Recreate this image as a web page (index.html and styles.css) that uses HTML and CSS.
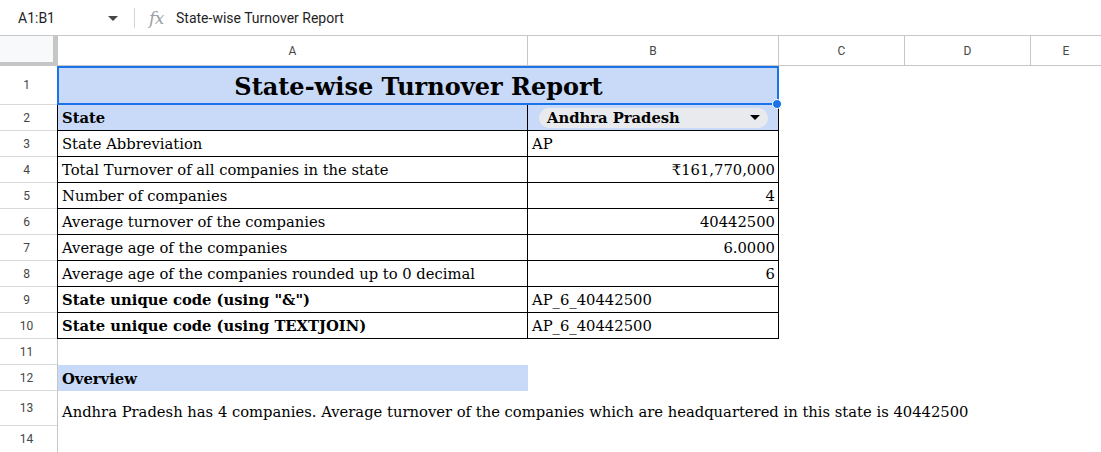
FILE: index.html
```html
<!DOCTYPE html>
<html>
<head>
<meta charset="utf-8">
<link rel="stylesheet" href="styles.css">
</head>
<body>
<div class="toolbar">
  <div class="namebox">A1:B1</div>
  <div class="caret"></div>
  <div class="sep"></div>
  <div class="fx">fx</div>
  <div class="formula">State-wise Turnover Report</div>
</div>
<div class="sheet">
  <div class="corner"></div>
  <div class="colhead first">A</div>
  <div class="colhead">B</div>
  <div class="colhead">C</div>
  <div class="colhead">D</div>
  <div class="colhead last">E</div>

  <div class="rowhead">1</div>
  <div class="cell title">State-wise Turnover Report</div>
  <div class="blank"></div><div class="blank"></div><div class="blank"></div>

  <div class="rowhead">2</div>
  <div class="cell ta head bold">State</div>
  <div class="cell tb head chipcell"><div class="chip"><span>Andhra Pradesh</span><span class="tri"></span></div></div>
  <div class="blank"></div><div class="blank"></div><div class="blank"></div>

  <div class="rowhead">3</div>
  <div class="cell ta">State Abbreviation</div>
  <div class="cell tb">AP</div>
  <div class="blank"></div><div class="blank"></div><div class="blank"></div>

  <div class="rowhead">4</div>
  <div class="cell ta">Total Turnover of all companies in the state</div>
  <div class="cell tb num">₹161,770,000</div>
  <div class="blank"></div><div class="blank"></div><div class="blank"></div>

  <div class="rowhead">5</div>
  <div class="cell ta">Number of companies</div>
  <div class="cell tb num">4</div>
  <div class="blank"></div><div class="blank"></div><div class="blank"></div>

  <div class="rowhead">6</div>
  <div class="cell ta">Average turnover of the companies</div>
  <div class="cell tb num">40442500</div>
  <div class="blank"></div><div class="blank"></div><div class="blank"></div>

  <div class="rowhead">7</div>
  <div class="cell ta">Average age of the companies</div>
  <div class="cell tb num">6.0000</div>
  <div class="blank"></div><div class="blank"></div><div class="blank"></div>

  <div class="rowhead">8</div>
  <div class="cell ta">Average age of the companies rounded up to 0 decimal</div>
  <div class="cell tb num">6</div>
  <div class="blank"></div><div class="blank"></div><div class="blank"></div>

  <div class="rowhead">9</div>
  <div class="cell ta bold">State unique code (using "&amp;")</div>
  <div class="cell tb">AP_6_40442500</div>
  <div class="blank"></div><div class="blank"></div><div class="blank"></div>

  <div class="rowhead">10</div>
  <div class="cell ta bold">State unique code (using TEXTJOIN)</div>
  <div class="cell tb">AP_6_40442500</div>
  <div class="blank"></div><div class="blank"></div><div class="blank"></div>

  <div class="rowhead">11</div>
  <div class="cell plain"></div>
  <div class="blank"></div><div class="blank"></div><div class="blank"></div><div class="blank"></div>

  <div class="rowhead">12</div>
  <div class="cell plain fill bold">Overview</div>
  <div class="blank"></div><div class="blank"></div><div class="blank"></div><div class="blank"></div>

  <div class="rowhead">13</div>
  <div class="cell plain overflow">Andhra Pradesh has 4 companies. Average turnover of the companies which are headquartered in this state is 40442500</div>
  <div class="blank"></div><div class="blank"></div><div class="blank"></div><div class="blank"></div>

  <div class="rowhead">14</div>
  <div class="cell plain"></div>
  <div class="blank"></div><div class="blank"></div><div class="blank"></div><div class="blank"></div>

  <div class="selection"></div>
  <div class="handle"></div>
</div>
</body>
</html>
```
FILE: styles.css
```css
html, body {
  margin: 0;
  padding: 0;
  background: #fff;
  width: 1101px;
  height: 452px;
  overflow: hidden;
}

.toolbar {
  height: 35px;
  border-bottom: 1px solid #c7c7c7;
  display: flex;
  align-items: center;
  font-family: Roboto, "Liberation Sans", sans-serif;
  color: #1f1f1f;
}
.namebox {
  font-size: 14px;
  padding-left: 18px;
  width: 90px;
}
.caret {
  width: 0;
  height: 0;
  border-left: 5px solid transparent;
  border-right: 5px solid transparent;
  border-top: 5px solid #444746;
  margin-top: 1px;
}
.sep {
  width: 1px;
  height: 20px;
  background: #d5d5d5;
  margin-left: 16px;
}
.fx {
  font-family: "DejaVu Serif", serif;
  font-style: italic;
  font-size: 17px;
  color: #9aa0a6;
  margin-left: 14px;
  width: 29px;
  letter-spacing: -0.5px;
}
.formula {
  font-size: 14px;
  margin-left: -2px;
}

.sheet {
  position: relative;
  display: grid;
  grid-template-columns: 57px 471px 251px 126px 126px 1fr;
  grid-template-rows: 30px 39px repeat(10, 26px) 26px 35px 27px;
  font-family: "DejaVu Serif", serif;
  font-size: 14.75px;
  color: #000;
}
.sheet > div {
  box-sizing: border-box;
}
.corner {
  background: #f8f9fa;
  border-right: 4px solid #c4c7c5;
  border-bottom: 4px solid #c4c7c5;
}
.colhead {
  border-right: 1px solid #c4c7c5;
  border-bottom: 1px solid #c4c7c5;
  display: flex;
  align-items: center;
  justify-content: center;
  font-family: Roboto, "Liberation Sans", sans-serif;
  font-size: 12px;
  color: #444746;
}
.colhead.first {
  border-left: 1px solid #c4c7c5;
}
.colhead.last {
  border-right: none;
}
.rowhead {
  grid-column: 1;
  border-bottom: 1px solid #d9d9d9;
  display: flex;
  align-items: center;
  justify-content: center;
  padding-right: 4px;
  font-family: Roboto, "Liberation Sans", sans-serif;
  font-size: 12px;
  color: #444746;
}
.cell {
  display: flex;
  align-items: flex-end;
  padding: 0 3px 3px 4px;
  white-space: nowrap;
  line-height: 18px;
}
.title {
  grid-column: 2 / span 2;
  background: #c9daf8;
  border-left: 1px solid #000;
  border-right: 1px solid #000;
  border-bottom: 1px solid #000;
  justify-content: center;
  font-weight: bold;
  font-size: 24px;
  line-height: 30px;
  padding-bottom: 2px;
}
.ta {
  border-left: 1px solid #000;
  border-right: 1px solid #000;
  border-bottom: 1px solid #000;
}
.tb {
  border-right: 1px solid #000;
  border-bottom: 1px solid #000;
}
.head {
  background: #c9daf8;
}
.bold {
  font-weight: bold;
}
.num {
  justify-content: flex-end;
}
.plain {
  border-left: 1px solid #c4c7c5;
}
.fill {
  background: #c9daf8;
}
.overflow {
  overflow: visible;
  padding-bottom: 5px;
}
.chipcell {
  align-items: center;
  padding: 0 10px 0 11px;
}
.chip {
  flex: 1;
  height: 20px;
  border-radius: 10px;
  background: #e8eaed;
  display: flex;
  align-items: center;
  justify-content: space-between;
  padding: 0 8px;
  font-weight: bold;
  line-height: 18px;
}
.tri {
  width: 0;
  height: 0;
  border-left: 5.5px solid transparent;
  border-right: 5.5px solid transparent;
  border-top: 5.5px solid #000;
}

.selection {
  position: absolute;
  left: 57px;
  top: 30px;
  width: 722px;
  height: 39px;
  border: 2px solid #1a73e8;
  pointer-events: none;
}
.handle {
  position: absolute;
  left: 772px;
  top: 63px;
  width: 10px;
  height: 10px;
  border-radius: 50%;
  background: #1a73e8;
  border: 1px solid #fff;
}
```
